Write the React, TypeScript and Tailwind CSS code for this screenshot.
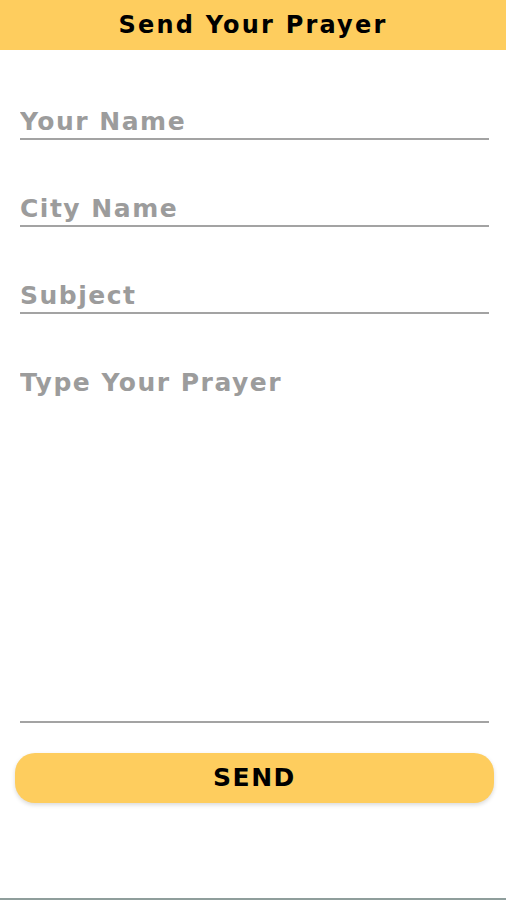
export default function App() {
  const font = { fontFamily: '"DejaVu Sans", "Noto Sans", sans-serif' }
  const field =
    'h-[42px] w-full pt-[6px] border-b-2 border-[#a3a3a3] text-[25px] font-bold tracking-[1.5px] text-[#555] outline-none placeholder:text-[#9c9c9c]'
  return (
    <div className="h-[900px] w-full bg-white flex flex-col border-b-2 border-[#8f9e9c]" style={font}>
      {/* Header */}
      <div className="h-[50px] bg-[#fecd5e] flex items-center justify-center">
        <h1 className="text-[24px] font-bold text-black tracking-[2.2px]">Send Your Prayer</h1>
      </div>

      <div className="pl-[20px] pr-[17px] flex flex-col">
        <input placeholder="Your Name" className={`mt-[48px] ${field}`} />
        <input placeholder="City Name" className={`mt-[45px] ${field}`} />
        <input placeholder="Subject" className={`mt-[45px] ${field}`} />
        <textarea
          placeholder="Type Your Prayer"
          className="mt-[50px] h-[359px] w-full resize-none border-b-2 border-[#a3a3a3] text-[25px] font-bold tracking-[1.5px] text-[#555] outline-none placeholder:text-[#9c9c9c]"
        />
      </div>

      <div className="pl-[15px] pr-[12px] mt-[30px]">
        <button className="w-full h-[50px] rounded-[20px] bg-[#fecd5e] shadow-[0_2px_4px_rgba(0,0,0,0.15)] text-[25px] font-bold tracking-[1.5px] text-black">
          SEND
        </button>
      </div>
    </div>
  )
}
